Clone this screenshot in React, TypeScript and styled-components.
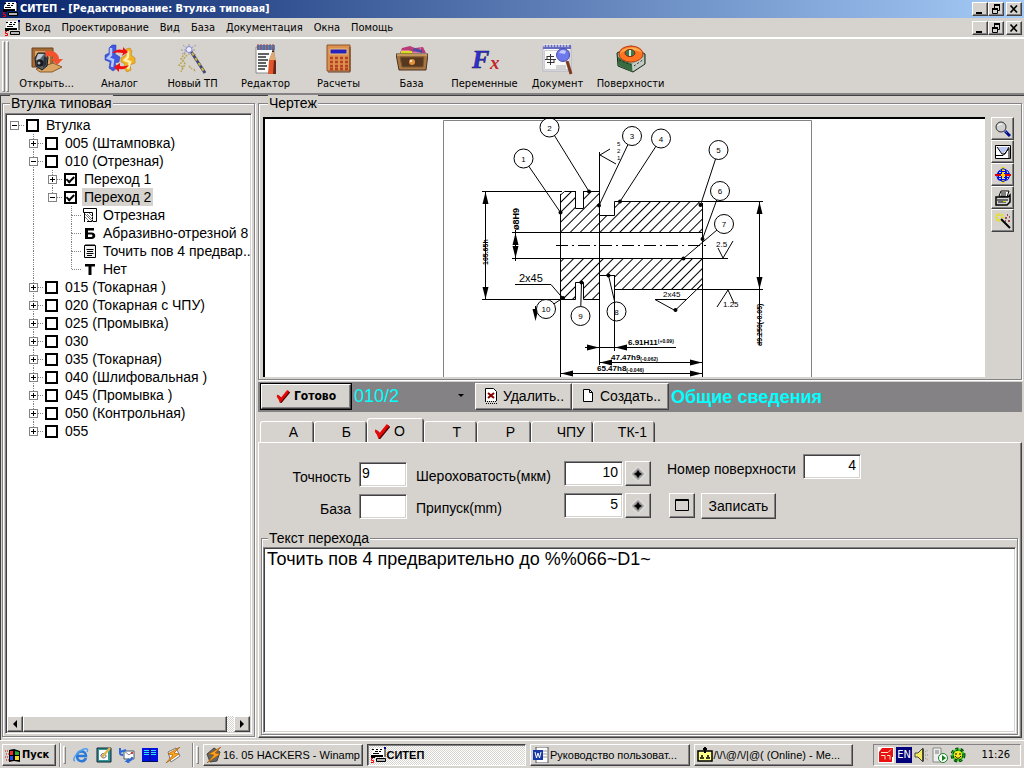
import React from "react";
import styled, { createGlobalStyle, css } from "styled-components";

const face = "#d6d3ce";
const grey = "#848284";
const dark = "#424142";
const ui = `"DejaVu Sans Condensed", "DejaVu Sans", sans-serif`;
const body = `"Liberation Sans", Arial, sans-serif`;

const GlobalStyle = createGlobalStyle`
  * { box-sizing: border-box; }
  body { margin: 0; background: ${face}; color: #000; }
  button, input, select, textarea { font: inherit; color: inherit; margin: 0; }
`;

const raised = css`
  background: ${face};
  border: 1px solid;
  border-color: #fff ${dark} ${dark} #fff;
  box-shadow: inset -1px -1px 0 ${grey};
`;
const sunken = css`
  border: 1px solid;
  border-color: ${grey} #fff #fff ${grey};
  box-shadow: inset 1px 1px 0 ${dark}, inset -1px -1px 0 ${face};
`;

const Screen = styled.div`
  min-height: 100vh;
  display: flex;
  flex-direction: column;
  font: 11px/14px ${ui};
`;
const TitleBar = styled.header`
  display: flex;
  align-items: center;
  height: 18px;
  padding: 0 2px;
  gap: 2px;
  color: #fff;
  background: linear-gradient(90deg, #08246b, #a5cbf7);
`;
const Title = styled.h1`
  flex: 1;
  margin: 0;
  font: bold 11px/16px ${ui};
  white-space: nowrap;
`;
const WindowButtons = styled.div`
  display: flex;
  align-items: center;
`;
const WindowButton = styled.button<{ $apart?: boolean }>`
  ${raised}
  width: 16px;
  height: 14px;
  padding: 0;
  margin-left: ${(p) => (p.$apart ? 2 : 0)}px;
  display: grid;
  place-items: center;
`;
const MenuBar = styled.nav`
  display: flex;
  align-items: center;
  height: 20px;
  padding: 0 2px 0 4px;
  border-bottom: 1px solid #fff;
`;
const MenuItems = styled.div`
  flex: 1;
  display: flex;
`;
const MenuItem = styled.button`
  border: 0;
  background: none;
  padding: 0 6px 0 5px;
  white-space: nowrap;
`;
const Toolbar = styled.div`
  display: flex;
  height: 57px;
  padding: 2px 0 0 2px;
  border-top: 1px solid #fff;
  border-bottom: 2px solid ${grey};
  box-shadow: 0 1px 0 ${dark};
`;
const Grip = styled.span`
  width: 3px;
  height: ${(p: { $h?: number }) => p.$h ?? 51}px;
  margin-right: 1px;
  border: 1px solid;
  border-color: #fff ${grey} ${grey} #fff;
`;
const ToolButton = styled.button`
  width: 73px;
  border: 0;
  padding: 3px 0 0;
  background: none;
  display: flex;
  flex-direction: column;
  align-items: center;
  gap: 1px;
  white-space: nowrap;
`;
const Main = styled.main`
  flex: 1;
  display: flex;
  padding: 0 2px 2px 0;
  border-left: 1px solid ${dark};
  font: 14px/16px ${body};
`;
const Group = styled.fieldset`
  display: flex;
  min-width: 0;
  margin: 0;
  padding: 2px;
  border: 1px solid ${grey};
  box-shadow: 1px 1px 0 #fff, inset 1px 1px 0 #fff;
`;
const Legend = styled.legend`
  padding: 0 1px;
  margin-left: 5px;
  background: ${face};
`;
const LeftPane = styled.aside`
  width: 256px;
  flex: none;
  display: flex;
  padding: 0 2px 1px 1px;
`;
const LeftGroup = styled(Group)`
  flex: 1;
`;
const TreeBox = styled.div`
  ${sunken}
  flex: 1;
  min-width: 0;
  background: #fff;
  padding: 2px 1px 1px 0;
  display: flex;
  flex-direction: column;
`;
const Tree = styled.ul`
  flex: 1;
  margin: 0 0 0 -1px;
  padding: 0;
  list-style: none;
  overflow: hidden;
`;
const Row = styled.li`
  display: flex;
  height: 18px;
  align-items: center;
  white-space: nowrap;
`;
const Cell = styled.svg`
  width: 19px;
  height: 18px;
  flex: none;
`;
const Tick = styled.input`
  appearance: none;
  flex: none;
  width: 13px;
  height: 13px;
  margin: 0 5px 0 2px;
  border: 2px solid #000;
  background: #fff;
  display: grid;
  place-items: center;
  &:checked::after {
    content: "";
    width: 6px;
    height: 3px;
    border: solid #000;
    border-width: 0 0 2px 2px;
    transform: rotate(-45deg) translate(0, -1px);
  }
`;
const NodeLabel = styled.label<{ $selected?: boolean }>`
  padding: 0 2px;
  line-height: 18px;
  background: ${(p) => (p.$selected ? face : "transparent")};
`;
const LeafIcon = styled.svg`
  width: 14px;
  height: 14px;
  flex: none;
  margin: 0 4px 0 2px;
`;
const ScrollBar = styled.div`
  display: flex;
  height: 16px;
  margin-left: 1px;
  background: repeating-conic-gradient(${face} 0 25%, #fff 0 50%) 0 0 / 2px 2px;
`;
const ScrollButton = styled.button`
  ${raised}
  width: 16px;
  padding: 0;
  display: grid;
  place-items: center;
`;
const ScrollThumb = styled.div`
  ${raised}
  width: 204px;
  margin-right: auto;
`;
const RightPane = styled.section`
  flex: 1;
  min-width: 0;
  display: flex;
  flex-direction: column;
  padding-left: 1px;
`;
const DrawingGroup = styled(Group)`
  height: 285px;
  padding: 6px 7px 2px 4px;
  gap: 6px;
`;
const DrawingBox = styled.div`
  flex: 1;
  background: #fff;
  border: solid #000;
  border-width: 2px 0 0 2px;
  display: flex;
  justify-content: center;
  overflow: hidden;
  svg { flex: none; margin-left: 6px; }
`;
const SideTools = styled.div`
  display: flex;
  flex-direction: column;
`;
const SideButton = styled.button`
  ${raised}
  width: 23px;
  height: 23px;
  padding: 0;
  display: grid;
  place-items: center;
`;
const ActionBar = styled.div`
  display: flex;
  align-items: center;
  height: 30px;
  margin-top: 2px;
  padding: 0 2px 2px;
  background: ${grey};
`;
const ActionButton = styled.button<{ $main?: boolean }>`
  ${raised}
  height: 27px;
  width: ${(p) => (p.$main ? 92 : 97)}px;
  padding: 0 4px;
  display: flex;
  align-items: center;
  justify-content: center;
  gap: 4px;
  white-space: nowrap;
  ${(p) => p.$main && css`
    font: bold 12px/14px ${ui};
    outline: 1px solid #000;
    outline-offset: -1px;
    border-width: 2px;
  `}
`;
const StepPicker = styled.div`
  display: grid;
  align-items: center;
  width: 123px;
  > * { grid-area: 1 / 1; }
  svg { justify-self: end; margin-right: 11px; pointer-events: none; }
`;
const StepSelect = styled.select`
  appearance: none;
  border: 0;
  padding: 0 2px;
  background: none;
  color: #00ffff;
  font: 18px/24px ${body};
`;
const Info = styled.h2`
  margin: 0;
  padding: 2px 0 0 2px;
  color: #00ffff;
  font: bold 18px/26px ${body};
`;
const Tabs = styled.div`
  display: flex;
  align-items: flex-end;
  height: 30px;
  gap: 1px;
  padding-left: 2px;
`;
const Tab = styled.button<{ $w: number; $on?: boolean }>`
  width: ${(p) => p.$w}px;
  height: ${(p) => (p.$on ? 24 : 21)}px;
  padding: 0 ${(p) => (p.$on ? 17 : p.$w > 60 ? 6 : 14)}px 0 6px;
  display: flex;
  align-items: center;
  justify-content: space-between;
  background: ${face};
  border: 1px solid #fff;
  border-bottom: 0;
  border-right-color: ${grey};
  border-radius: 3px 2px 0 0;
  box-shadow: 1px 1px 0 ${dark};
  span { margin-left: auto; }
`;
const TabPanel = styled.div`
  flex: 1;
  display: flex;
  flex-direction: column;
  padding: 9px 3px 2px 2px;
  border: 1px solid;
  border-color: #fff ${dark} ${dark} #fff;
  box-shadow: inset -1px -1px 0 ${grey};
`;
const Form = styled.form`
  display: flex;
  height: 78px;
  padding-left: 28px;
`;
const FieldColumn = styled.div<{ $top: number; $cols: string; $gap: number }>`
  display: grid;
  grid-template-columns: ${(p) => p.$cols};
  grid-auto-rows: 25px;
  align-content: start;
  align-items: center;
  gap: 7px 2px;
  padding-top: ${(p) => p.$top}px;
  margin-left: ${(p) => p.$gap}px;
  white-space: nowrap;
`;
const FieldLabel = styled.label<{ $right?: boolean }>`
  padding-top: 4px;
  text-align: ${(p) => (p.$right ? "right" : "left")};
  padding-right: 6px;
`;
const Field = styled.input<{ $right?: boolean }>`
  ${sunken}
  width: 100%;
  height: 25px;
  padding: 0 4px 3px 2px;
  background: #fff;
  border-radius: 0;
  text-align: ${(p) => (p.$right ? "right" : "left")};
`;
const SquareButton = styled.button`
  ${raised}
  width: 26px;
  height: 25px;
  padding: 0;
  display: grid;
  place-items: center;
`;
const FormActions = styled.div`
  grid-column: 1 / -1;
  display: flex;
  gap: 6px;
  padding: 14px 0 0 2px;
`;
const SaveButton = styled.button`
  ${raised}
  width: 75px;
  height: 26px;
  padding: 0;
`;
const TextGroup = styled(Group)`
  flex: 1;
  padding: 1px;
`;
const TextArea = styled.textarea`
  ${sunken}
  flex: 1;
  min-width: 0;
  padding: 1px 3px;
  background: #fff;
  font: 18px/20px ${body};
  resize: none;
  border-radius: 0;
`;
const TaskBar = styled.footer`
  display: flex;
  align-items: center;
  height: 28px;
  padding: 1px 3px 0 2px;
  border-top: 1px solid #fff;
`;
const StartButton = styled.button`
  ${raised}
  width: 54px;
  height: 22px;
  padding: 0 2px;
  display: flex;
  align-items: center;
  gap: 1px;
  font: bold 11px/14px ${ui};
`;
const BarSplit = styled.span`
  width: 2px;
  height: 24px;
  margin: 0 2px 0 3px;
  border-left: 1px solid ${grey};
  border-right: 1px solid #fff;
`;
const QuickLaunch = styled.div`
  display: flex;
  gap: 7px;
  width: 122px;
  padding-left: 6px;
`;
const QuickLink = styled.button`
  width: 16px;
  height: 16px;
  padding: 0;
  border: 0;
  background: none;
`;
const Tasks = styled.div`
  flex: 1;
  min-width: 0;
  display: flex;
  gap: 4px;
  padding: 0 20px 0 3px;
`;
const TaskButton = styled.button<{ $on?: boolean }>`
  ${raised}
  flex: 0 1 160px;
  min-width: 0;
  height: 22px;
  padding: 0 2px;
  display: flex;
  align-items: center;
  gap: 1px;
  font: 11px/14px ${body};
  white-space: nowrap;
  svg { flex: none; }
  ${(p) => p.$on && css`
    border-color: ${dark} #fff #fff ${dark};
    box-shadow: inset 1px 1px 0 ${grey};
    background: repeating-conic-gradient(${face} 0 25%, #fff 0 50%) 0 0 / 2px 2px;
    font-weight: bold;
  `}
`;
const Tray = styled.div`
  display: flex;
  align-items: center;
  width: 148px;
  height: 22px;
  padding: 0 10px 0 4px;
  gap: 2px;
  border: 1px solid;
  border-color: ${grey} #fff #fff ${grey};
`;
const Lang = styled.span`
  width: 16px;
  height: 16px;
  background: #00007b;
  color: #fff;
  text-align: center;
  line-height: 16px;
`;
const Clock = styled.time`
  margin-left: auto;
`;

type IconProps = { size?: number; view?: string; children: React.ReactNode };
const Icon = ({ size = 16, view = "0 0 16 16", children }: IconProps) => (
  <svg width={size} height={size} viewBox={view} aria-hidden="true">{children}</svg>
);

const AppIcon = () => (
  <Icon>
    <path d="M4 1h11v9H2V5z" fill="#fff" />
    <path d="M2 2.500h2M6 2.500h2M10 2.500h2M5 4.500h3M9 4.500h2M3 6.500h6" stroke="#000" fill="none" />
    <path d="M15 1v9" stroke="#000" /><path d="M14 0h2v2h-2z" fill="#00007b" />
    <path d="M6.500 11.500h9v3h-9z" fill="#b5b6b5" stroke="#000" />
    <path d="M1 8h12v2H1z" fill="#000" /><path d="M1 10h4v1H1z" fill="#000" />
    <path d="M3 11.500H1.500v2h2v2H1" stroke="#f00000" fill="none" />
  </Icon>
);
const MinimizeGlyph = () => <Icon size={12} view="0 0 12 12"><path d="M2 9h6v2H2z" /></Icon>;
const RestoreGlyph = () => (
  <Icon size={12} view="0 0 12 12">
    <path d="M4 1h6v2H4zM2 5h6v2H2z" />
    <path d="M4.500 3v2M9.500 2v5.500H8M2.500 6v4.500h5V5" fill="none" stroke="#000" />
  </Icon>
);
const CloseGlyph = () => (
  <Icon size={12} view="0 0 12 12"><path d="M2.500 2.500l6.500 7M9 2.500l-6.500 7" stroke="#000" strokeWidth="1.700" /></Icon>
);
const WindowControls = ({ of }: { of: string }) => (
  <WindowButtons>
    <WindowButton aria-label={`Свернуть ${of}`}><MinimizeGlyph /></WindowButton>
    <WindowButton aria-label={`Восстановить ${of}`}><RestoreGlyph /></WindowButton>
    <WindowButton $apart aria-label={`Закрыть ${of}`}><CloseGlyph /></WindowButton>
  </WindowButtons>
);

const toolIcons = {
  open: (
    <>
      <path d="M1 4h21v19H1z" fill="#a86a35" stroke="#6b421f" />
      <path d="M4 7h15v13H4z" fill="#d9a567" />
      <path d="M5 25l17-6 9 4-10 5H9z" fill="#dba663" stroke="#8b5a2b" />
      <path d="M4 14l3-5h7l3 4-1 9-5 4-6-4z" fill="#59616b" stroke="#15181d" />
      <path d="M7 10h6l-4 5-4 1z" fill="#c0c8d2" /><path d="M13 12l3 2-1 7-3 3z" fill="#2b3036" />
      <circle cx="9" cy="19" r="3.500" fill="#16181c" /><circle cx="8" cy="19" r="1.500" fill="#a0a8b0" />
      <path d="M14 7h7c4 1 7 4 7 8h4l-6 6-6-6h3c0-3-4-4-8-2z" fill="#f4512c" />
    </>
  ),
  analog: (
    <>
      <path d="M5 4l3-3h4v5l-1 4 5 3-1 5-4 1 2 5-4 3-4-3 1-6-5-2V11l4-2z" fill="#4158e0" stroke="#2338a8" strokeWidth="0.500" />
      <path d="M7 4v7l-3 3 5 2-1 7" stroke="#b4c8ff" strokeWidth="2.500" fill="none" />
      <path d="M22 5l4-1 2 3-1 4 4 3v5l-5 2 1 5-4 2-3-4 1-4-4-2v-4l5-3z" fill="#f2b322" stroke="#b0720c" strokeWidth="0.500" />
      <path d="M24 7v6l-3 3 5 2-2 7" stroke="#fff0b0" strokeWidth="2.500" fill="none" />
      <path d="M8 9q5-5 11-3V3l5 5-6 4 1-3q-5-1-11 0z" fill="#f01010" />
      <path d="M25 21q-3 5-10 4v3l-5-5 6-4v3q4 1 9-1z" fill="#f01010" />
    </>
  ),
  wizard: (
    <>
      <path d="M13 6l15 23" stroke="#464673" strokeWidth="3" /><path d="M15 9l13 20" stroke="#c9b53b" strokeWidth="2" strokeDasharray="3 3" />
      <path d="M6 1l13 10M19 1L5 10M12 0v12M4 6h15" stroke="#9a9cae" strokeDasharray="2 1" />
      <circle cx="12" cy="5.500" r="3" fill="#eef0ff" stroke="#8185d0" />
      <path d="M8 9l-4 6 2 2-4 4 4 2-2 5M10 11l-4 5 2 4-3 6M12 22l3 3M17 25l1 3" stroke="#b9a654" strokeWidth="1.500" strokeDasharray="2 1" fill="none" />
    </>
  ),
  editor: (
    <>
      <path d="M6 3h18v26H6z" fill="#fbfbfb" stroke="#8a8a8a" />
      <path d="M7 1h18v5H7z" fill="#4a85c8" /><path d="M8 0v6M11 0v6M14 0v6M17 0v6M20 0v6M23 0v6" stroke="#a83c38" />
      <path d="M8 10h11M8 13h8M8 16h10M8 19h8M8 22h9M8 25h7" stroke="#303030" strokeWidth="1.500" />
      <path d="M19 16l4-10 3 10v14h-8z" fill="#e0552b" /><path d="M19 16l4-10 3 10z" fill="#dcaa77" /><path d="M22 8l1-3 1 3z" fill="#111" />
      <path d="M24 16l2 1v13h-3z" fill="#66261b" />
    </>
  ),
  calc: (
    <>
      <path d="M4 1h23v26H4z" fill="#dd914f" stroke="#8d552c" /><path d="M5 28h22V3" fill="none" stroke="#6b3b1c" />
      <path d="M7 5h17v5H7z" fill="#2622bb" stroke="#e9bc85" />
      <path d="M7 14h18M7 18h18M7 22h18M7 25h18" stroke="#b64122" strokeWidth="2.500" strokeDasharray="3 2" />
    </>
  ),
  base: (
    <>
      <path d="M6 4l8-2 5 2 8-1 3 6H4z" fill="#b73c78" /><path d="M5 6h8l4 2 8-4v5H5z" fill="#e37a9b" /><path d="M5 7h11v3H5z" fill="#d9dd27" />
      <path d="M18 4l8 2v3l-9-2z" fill="#4a4ca4" />
      <path d="M0 10h32l-2 16H3z" fill="#a87744" stroke="#4a331e" /><path d="M1 10h30v2H1z" fill="#c5955e" />
      <path d="M4 13h24l-1 10H6z" fill="#55381f" stroke="#7d5730" /><circle cx="16" cy="18" r="3" fill="#e8913b" /><circle cx="15" cy="17" r="1" fill="#fff" />
    </>
  ),
  fx: (
    <g fontFamily={`"Liberation Serif", serif`} fontStyle="italic" fontWeight="bold">
      <text x="3" y="24" fontSize="26" fill="#3030d0" stroke="#17175c" strokeWidth="0.500">F</text>
      <text x="21" y="25" fontSize="19" fill="#c1272d">x</text>
    </g>
  ),
  doc: (
    <>
      <path d="M1 2h28v25H1z" fill="#fafafa" stroke="#b0b2c0" /><path d="M1 1h28v4H1z" fill="#686cc0" />
      <path d="M2 0v3M5 0v3M8 0v3M11 0v3M14 0v3M17 0v3M20 0v3M23 0v3M26 0v3" stroke="#fff" />
      <path d="M2.500 6.500h25v19h-25z" fill="none" stroke="#ccc" />
      <path d="M3 15.500h11M8.500 10v11M5 12.500h7M5 18.500h7M5 12v3M12 16v3" stroke="#333" fill="none" /><path d="M14 22h10M14 24h10" stroke="#aaa" />
      <circle cx="21" cy="11" r="6.500" fill="#6e79ed" stroke="#4a4ca8" /><path d="M17 9c2-4 5-3 7-2l-1 3z" fill="#c2c9ff" />
      <path d="M25 17l4 13" stroke="#7d3a22" strokeWidth="3" />
    </>
  ),
  surface: (
    <>
      <path d="M2 9l14-7 14 8v10l-12 8L3 22z" fill="#8fae91" stroke="#132716" /><path d="M3 13l14 7v8L3 21z" fill="#396b41" />
      <path d="M17 20l12-7v7l-11 7z" fill="#c5cbc4" /><path d="M4 16l12 5M19 22l10-7" stroke="#1c3020" strokeDasharray="2 2" />
      <ellipse cx="16" cy="10" rx="12" ry="8" fill="#ff7321" stroke="#c03c14" /><path d="M5 10c2-8 19-9 22-1-4-3-17-5-22 1z" fill="#ffb050" />
      <ellipse cx="15" cy="9" rx="5" ry="3.500" fill="#407b50" stroke="#7b2710" /><path d="M14 6v6h2V6z" fill="#d4ede0" />
    </>
  ),
};
const tools: [keyof typeof toolIcons, string][] = [
  ["open", "Открыть..."], ["analog", "Аналог"], ["wizard", "Новый ТП"], ["editor", "Редактор"], ["calc", "Расчеты"],
  ["base", "База"], ["fx", "Переменные"], ["doc", "Документ"], ["surface", "Поверхности"],
];

/* Tree columns: space, a through line, an end of a branch, or an expander box */
type Col = " " | "|" | "t" | "L" | "+" | "-";
const TreeCell = ({ kind, up, down }: { kind: Col; up: boolean; down: boolean }) => (
  <Cell viewBox="0 0 19 18" aria-hidden="true">
    <g stroke={grey} strokeDasharray="1 1" fill="none">
      {kind !== " " && up && <path d="M9.500 0v9" />}
      {kind !== " " && down && <path d="M9.500 9v9" />}
      {"tL+-".includes(kind) && <path d="M10 9.500h9" />}
    </g>
    {(kind === "+" || kind === "-") && (
      <g stroke="#000">
        <rect x="5.500" y="5.500" width="8" height="8" fill="#fff" stroke={grey} />
        <path d={kind === "+" ? "M7 9.500h5M9.500 7v5" : "M7 9.500h5"} />
      </g>
    )}
  </Cell>
);
const leafIcons = {
  part: (
    <>
      <path d="M0.500 4.500v-4h13v13h-4v-9h-9" fill="none" stroke="#000" />
      <path d="M1.500 5v9M4 13.500h6" stroke="#000" />
      <path d="M2 6l8 8M4 6l6 6M6 5l4 4M2 9l4 4" stroke="#777" />
    </>
  ),
  b: <path d="M2 2h9v2.500H5V6.500h3.500c5 0 5 6.500 0 6.500H2zM5 8.500v2.500h3c2 0 2-2.500 0-2.500z" fillRule="evenodd" />,
  note: (
    <>
      <path d="M1.500 1.500h11v12h-11zM3 0v2M5 0v2M7 0v2M9 0v2M11 0v2" fill="#f3f3f3" stroke="#000" />
      <path d="M3.500 5.500h7M4 7.500h6M3.500 9.500h7M4 11.500h5" stroke="#000" />
    </>
  ),
  t: <path d="M2 2h10v2.500H8.500V13h-3V4.500H2z" />,
};
type Node = { cols: string; text: string; checked?: boolean; selected?: boolean; leaf?: keyof typeof leafIcons };
const nodes: Node[] = [
  { cols: "-", text: "Втулка" },
  { cols: " +", text: "005 (Штамповка)" },
  { cols: " -", text: "010 (Отрезная)" },
  { cols: " |+", text: "Переход 1", checked: true },
  { cols: " |-", text: "Переход 2", checked: true, selected: true },
  { cols: " | t", text: "Отрезная", leaf: "part" },
  { cols: " | t", text: "Абразивно-отрезной 8", leaf: "b" },
  { cols: " | t", text: "Точить пов 4 предвар..", leaf: "note" },
  { cols: " | L", text: "Нет", leaf: "t" },
  { cols: " +", text: "015 (Токарная )" },
  { cols: " +", text: "020 (Токарная с ЧПУ)" },
  { cols: " +", text: "025 (Промывка)" },
  { cols: " +", text: "030" },
  { cols: " +", text: "035 (Токарная)" },
  { cols: " +", text: "040 (Шлифовальная )" },
  { cols: " +", text: "045 (Промывка )" },
  { cols: " +", text: "050 (Контрольная)" },
  { cols: " +", text: "055" },
];

const balloons: [number, number, number, number, number][] = [
  [1, 523.5, 158.5, 560.5, 212.5], [2, 549.5, 127.5, 589, 191.5], [3, 632, 136, 599, 205.5], [4, 661, 138.5, 620, 201.5],
  [5, 718.5, 150, 700.5, 205], [6, 720, 191, 702.5, 239], [7, 724, 224, 683.5, 258.5], [8, 616.5, 311.5, 608.5, 275.5],
  [9, 580.5, 316, 581.5, 282.5], [10, 546, 309, 563, 298],
];
const Arrow = ({ x, y, turn }: { x: number; y: number; turn: number }) => (
  <path d="M0 0l12-3v6z" transform={`translate(${x} ${y}) rotate(${turn})`} />
);
const Drawing = () => (
  <svg width="370" height="258" viewBox="443 119 370 258" fontFamily={body} fontSize="8" role="img" aria-label="Чертеж втулки">
    <defs>
      <pattern id="hatch" width="7" height="7" patternUnits="userSpaceOnUse" patternTransform="rotate(45)">
        <path d="M0.500 0v7" stroke="#000" />
      </pattern>
    </defs>
    <path d="M443.500 377V120.500h368V377" fill="none" stroke={grey} />
    <g fill="url(#hatch)" stroke="#000">
      <path d="M560.500 195l4-3.500h11v17h8v-17h16v24h15v-14H698l4.500 4.500v26.500h-142z" />
      <path d="M560.500 258.500h142V284l-5.500 5.500h-82.500v-14h-15v24h-16v-17h-8v17H564l-3.500-4.500z" />
    </g>
    <g fill="none" stroke="#000">
      <path d="M560.500 194v183M599.500 152v213M614.500 275v76M702.500 203v174M575.500 191v17M583.500 191v17" />
      <path d="M482 191.500h80M482 299.500h82M512 232.500h49M512 258.500h49M485.500 192v107M515.500 230v31" />
      <path d="M556 245.500h150" strokeDasharray="12 4 2 4" />
      <path d="M698 201.500h65M614 289.500h149M759.500 202v143M702 258.500h26" />
      <path d="M610 149l-10 6 16 9M718 248l5 10 10-17M717 307l11-17 6 13" />
      <path d="M515 284.500h36l12 14M686 299.500h-31l20 11 28-27M535.500 306v8" />
      <path d="M585 347.500h91M600 362.500h102M561 373.500h141" />
    </g>
    <Arrow x={485.5} y={192} turn={90} /><Arrow x={485.5} y={299} turn={-90} />
    <Arrow x={515.5} y={233} turn={90} /><Arrow x={515.5} y={258} turn={-90} />
    <Arrow x={759.5} y={202} turn={90} /><Arrow x={759.5} y={289} turn={-90} />
    <Arrow x={535.5} y={321} turn={-90} />
    <Arrow x={599} y={347.5} turn={180} /><Arrow x={615} y={347.5} turn={0} />
    <Arrow x={600} y={362.5} turn={0} /><Arrow x={702} y={362.5} turn={180} />
    <Arrow x={561} y={373.5} turn={0} /><Arrow x={702} y={373.5} turn={180} />
    {balloons.map(([n, cx, cy, x, y]) => (
      <g key={n}>
        <path d={n === 8 ? `M614.500 301L${x} ${y}` : `M${cx} ${cy}L${x} ${y}`} stroke="#000" />
        <circle cx={cx} cy={cy} r="9.500" fill={n === 8 ? "none" : "#fff"} stroke="#000" />
        <circle cx={x} cy={y} r="2" />
        <text x={cx} y={cy + 3} textAnchor="middle">{n}</text>
      </g>
    ))}
    <circle cx="675.500" cy="310" r="2" />
    <text x="519" y="282" fontSize="11">2x45</text>
    <text x="663" y="297">2x45</text>
    <text x="716" y="247">2.5</text>
    <text x="723" y="307">1.25</text>
    <g fontSize="6">
      <text x="617" y="146">5</text><text x="617" y="153">2</text><text x="617" y="160">1</text>
    </g>
    <text x="628" y="345" fontWeight="bold">6.91H11<tspan fontSize="5" dy="-2">(+0.09)</tspan></text>
    <text x="611" y="360" fontWeight="bold">47.47h9<tspan fontSize="5" dy="1">(-0.062)</tspan></text>
    <text x="597" y="371" fontWeight="bold">65.47h8<tspan fontSize="5" dy="1">(-0.046)</tspan></text>
    <g fontWeight="bold" fontSize="7">
      <text transform="translate(488 265) rotate(-90)">105.65h</text>
      <text transform="translate(519 230) rotate(-90)" fontSize="9">ø8H9</text>
      <text transform="translate(762 346) rotate(-90)">d9.250(-0.05)</text>
    </g>
  </svg>
);

const sideIcons: [string, React.ReactNode][] = [
  ["Масштаб", <><circle cx="6" cy="6" r="5" fill="#cfd0d0" stroke="#333" /><path d="M3 5c1-2 3-2 4-2" stroke="#fff" fill="none" /><path d="M10 10l5 5" stroke="#00108c" strokeWidth="3" /><path d="M9 9l3 3" stroke="#5a6cc0" /></>],
  ["Лист", <><path d="M0.500 1.500h15v13h-15z" fill="#fff" stroke="#000" /><path d="M2 3l6 7 5-6V3z" fill="#b9c6f4" /><path d="M2 3l5 7h3l4-7M1 11.500h7l6-7v10" stroke="#000" fill="none" /></>],
  ["Сетка", <><path d="M8 0v4M8 12v4" stroke="#f0d800" strokeWidth="3" /><path d="M8 1.500l5 2.500 2 4-2 4.500-5 2-5-2L1.500 8 4 4z" fill="none" stroke="#0010e0" /><path d="M3.500 4.500h8v8h-8zM6.500 2v12M10.500 2v12M2 6.500h12M2 10.500h12" fill="none" stroke="#0010e0" /><path d="M0 8h16" stroke="#e00000" strokeWidth="2" /><path d="M8 5v6M6 8h4" stroke="#f0d800" strokeWidth="2" /></>],
  ["Печать", <><path d="M4 6l2-5h8l-2 6z" fill="#fff" stroke="#000" /><path d="M6 3h5M6 5h5" stroke="#000" /><path d="M1 7h12l2-2v7l-3 3H1z" fill="#d5d5d5" stroke="#000" strokeWidth="1.500" /><path d="M2 10h11M3 12h8" stroke="#000" /><path d="M8 11h3v1H8z" fill="#d9cf20" /></>],
  ["Мастер", <><path d="M6 6l9 9" stroke="#000" strokeWidth="2" /><path d="M4.500 0v3M0 4.500h3M1 1l2 2M8 1L6 3M1 8l2-2M4.500 6v3M6 4.500h3" stroke="#e4df18" strokeWidth="1.500" /><path d="M10 5h2M13 8h2M12 2h1M10 8h1M14 4h1" stroke="#8c2222" strokeWidth="1.500" /></>],
];
const RedCheck = ({ w = 14 }: { w?: number }) => (
  <Icon size={w}><path d="M2 9c2 0 3 2 4 5l9-11" stroke="#520000" strokeWidth="3" fill="none" /><path d="M1 8c2 0 3 2 4 5L14 2" stroke="#e80808" strokeWidth="3" fill="none" /></Icon>
);
const Diamond = () => (
  <Icon>
    <path d="M8 0.500L15.500 8 8 15.500 0.500 8z" fill="#b4b2ae" stroke="#efefef" /><path d="M8 3l5 5-5 5-5-5z" fill="#8a8a8a" /><path d="M8 4l1.500 2.500L12 8 9.500 9.500 8 12 6.500 9.500 4 8l2.500-1.500z" fill="#000" />
  </Icon>
);

const tabs: [string, number, boolean][] = [
  ["А", 53, false], ["Б", 52, false], ["О", 56, true], ["Т", 52, false], ["Р", 53, false], ["ЧПУ", 61, false], ["ТК-1", 61, false],
];

const bolt = (
  <><path d="M1 7l7-6 6 4-3 9-7 1z" fill="#666" stroke="#444" /><path d="M15 0L3 7l5 1-7 8 13-9-5-1z" fill="#ffa51c" stroke="#a85a00" strokeWidth="0.700" /></>
);
const quick: [string, React.ReactNode][] = [
  ["Internet Explorer", <><path d="M13 11c-2 5-9 4-9-2s9-6 9 0H5" fill="none" stroke="#2a78d8" strokeWidth="2.500" /><path d="M2 14c-4-1 3-10 9-12 4-1 4 1 3 3" fill="none" stroke="#4da0f0" strokeWidth="1.500" /></>],
  ["Рабочий стол", <><path d="M1 1h14v14H1z" fill="#2f9696" stroke="#123" /><path d="M3 3h9v10H3z" fill="#fff" /><path d="M5 8c2-3 5-1 5 1s-4 3-5 0z" fill="none" stroke="#456" /><path d="M6 10l8-9" stroke="#e2b548" strokeWidth="2.500" /></>],
  ["Почта", <><path d="M5 4h10v8H5z" fill="#fff" stroke="#456" /><path d="M5 4l5 4 5-4" fill="none" stroke="#888" /><path d="M12 5h2v2h-2z" fill="#e33" /><path d="M1 1v5c0 2 1 2 3 2M1 5l6-2M13 10c0 3-2 4-5 4l2-2M8 14l2 2" stroke="#2868d8" strokeWidth="2" fill="none" /></>],
  ["Книга", <><path d="M0 1h16v13H0z" fill="#0010e0" /><path d="M2 3.500h5M2 5.500h5M2 7.500h5M9 3.500h5M9 5.500h5M9 7.500h5" stroke="#30e0f8" /><path d="M8 1v13M0 14.500h16" stroke="#001060" /></>],
  ["Winamp", <><path d="M3 5l8-4 4 8-9 6z" fill="#fff" stroke="#777" /><path d="M15 0L3 7l5 1-7 8 13-9-5-1z" fill="#ffa51c" stroke="#a85a00" strokeWidth="0.700" /></>],
];

export default function App() {
  return (
    <>
      <GlobalStyle />
      <Screen>
        <TitleBar>
          <AppIcon />
          <Title>СИТЕП - [Редактирование: Втулка типовая]</Title>
          <WindowControls of="программу" />
        </TitleBar>
        <MenuBar>
          <AppIcon />
          <MenuItems>
            {["Вход", "Проектирование", "Вид", "База", "Документация", "Окна", "Помощь"].map((m) => <MenuItem key={m}>{m}</MenuItem>)}
          </MenuItems>
          <WindowControls of="документ" />
        </MenuBar>
        <Toolbar>
          <Grip /><Grip />
          {tools.map(([id, text]) => (
            <ToolButton key={id}>
              <Icon size={32} view="0 0 32 32">{toolIcons[id]}</Icon>
              {text}
            </ToolButton>
          ))}
        </Toolbar>
        <Main>
          <LeftPane>
            <LeftGroup>
              <Legend>Втулка типовая</Legend>
              <TreeBox>
                <Tree>
                  {nodes.map((n, i) => (
                    <Row key={n.text}>
                      {[...n.cols].map((c, k) => (
                        <TreeCell key={k} kind={c as Col} up={k > 0} down={k > 0 && c !== "L" && !(k === 2 && c === "-") && i < nodes.length - 1} />
                      ))}
                      {n.leaf ? <LeafIcon viewBox="0 0 14 14">{leafIcons[n.leaf]}</LeafIcon> : <Tick type="checkbox" id={`n${i}`} defaultChecked={n.checked} />}
                      <NodeLabel htmlFor={n.leaf ? undefined : `n${i}`} $selected={n.selected}>{n.text}</NodeLabel>
                    </Row>
                  ))}
                </Tree>
                <ScrollBar>
                  <ScrollButton aria-label="Влево"><Icon size={8} view="0 0 8 8"><path d="M6 0v8L2 4z" /></Icon></ScrollButton>
                  <ScrollThumb />
                  <ScrollButton aria-label="Вправо"><Icon size={8} view="0 0 8 8"><path d="M2 0v8l4-4z" /></Icon></ScrollButton>
                </ScrollBar>
              </TreeBox>
            </LeftGroup>
          </LeftPane>
          <RightPane>
            <DrawingGroup>
              <Legend>Чертеж</Legend>
              <DrawingBox><Drawing /></DrawingBox>
              <SideTools>
                {sideIcons.map(([name, art]) => <SideButton key={name} aria-label={name}><Icon>{art}</Icon></SideButton>)}
              </SideTools>
            </DrawingGroup>
            <ActionBar>
              <ActionButton $main><RedCheck />Готово</ActionButton>
              <StepPicker>
                <StepSelect aria-label="Переход"><option>010/2</option></StepSelect>
                <svg width="6" height="4" viewBox="0 0 6 4"><path d="M0 0h6L3 3z" /></svg>
              </StepPicker>
              <ActionButton>
                <Icon><path d="M2.500 13V0.500h8l3 3V13" fill="#fff" stroke="#000" /><path d="M2 13.500h12M3 15.500h12" stroke="#000" strokeDasharray="1 1" /><path d="M5 5l6 5M11 5l-6 5" stroke="#840000" strokeWidth="2" /></Icon>
                Удалить..
              </ActionButton>
              <ActionButton>
                <Icon><path d="M3.500 1.500h6l3 3v9h-9z" fill="#fff" stroke="#000" /><path d="M9.500 1.500v3h3" fill="none" stroke="#000" /></Icon>
                Создать..
              </ActionButton>
              <Info>Общие сведения</Info>
            </ActionBar>
            <Tabs role="tablist">
              {tabs.map(([text, w, on]) => (
                <Tab key={text} role="tab" aria-selected={on} $w={w} $on={on}>{on && <RedCheck w={16} />}<span>{text}</span></Tab>
              ))}
            </Tabs>
            <TabPanel role="tabpanel">
              <Form>
                <FieldColumn $top={10} $cols="68px 48px" $gap={0}>
                  <FieldLabel $right htmlFor="acc">Точность</FieldLabel><Field id="acc" defaultValue="9" />
                  <FieldLabel $right htmlFor="bas">База</FieldLabel><Field id="bas" />
                </FieldColumn>
                <FieldColumn $top={9} $cols="146px 59px 26px" $gap={9}>
                  <FieldLabel htmlFor="rough">Шероховатость(мкм)</FieldLabel><Field id="rough" $right defaultValue="10" />
                  <SquareButton type="button" aria-label="Выбрать шероховатость"><Diamond /></SquareButton>
                  <FieldLabel htmlFor="allow">Припуск(mm)</FieldLabel><Field id="allow" $right defaultValue="5" />
                  <SquareButton type="button" aria-label="Выбрать припуск"><Diamond /></SquareButton>
                </FieldColumn>
                <FieldColumn $top={2} $cols="134px 58px" $gap={16}>
                  <FieldLabel htmlFor="surf">Номер поверхности</FieldLabel><Field id="surf" $right defaultValue="4" />
                  <FormActions>
                    <SquareButton type="button" aria-label="Окно"><Icon><path d="M1.500 2.500h13v11h-13zM1 3.500h14" fill="none" stroke="#000" /></Icon></SquareButton>
                    <SaveButton type="button">Записать</SaveButton>
                  </FormActions>
                </FieldColumn>
              </Form>
              <TextGroup>
                <Legend>Текст перехода</Legend>
                <TextArea aria-label="Текст перехода" defaultValue="Точить пов 4 предварительно до %%066~D1~" />
              </TextGroup>
            </TabPanel>
          </RightPane>
        </Main>
        <TaskBar>
          <StartButton>
            <Icon><path d="M0 4h4M1 7h3M0 10h4M1 13h3" stroke="#c00" strokeDasharray="1 1" /><path d="M4 3l5-1v12l-5 1zM9 2l6 2v11l-6-1z" fill="#000" /><path d="M5 4h3v4H5z" fill="#f03020" /><path d="M10 4l4 1v3h-4z" fill="#20b030" /><path d="M5 9h3v4H5z" fill="#2050f0" /><path d="M10 9h4v4h-4z" fill="#f0d820" /></Icon>
            Пуск
          </StartButton>
          <BarSplit /><Grip $h={18} />
          <QuickLaunch>
            {quick.map(([name, art]) => <QuickLink key={name} aria-label={name}><Icon>{art}</Icon></QuickLink>)}
          </QuickLaunch>
          <BarSplit /><Grip $h={18} />
          <Tasks>
            <TaskButton><Icon>{bolt}</Icon>16. 05 HACKERS - Winamp</TaskButton>
            <TaskButton $on><AppIcon />СИТЕП</TaskButton>
            <TaskButton>
              <Icon><path d="M3 0h12v16H3z" fill="#fff" stroke="#555" /><path d="M10 4h4M10 7h4M10 10h4" stroke="#999" /><path d="M0 3h10v10H0z" fill="#1838a8" /><path d="M2 5l1.500 6L5 6l1.500 5L8 5" stroke="#fff" fill="none" /></Icon>
              Руководство пользоват...
            </TaskButton>
            <TaskButton>
              <Icon><path d="M1 4h14v10H1z" fill="#ffff8c" stroke="#000" strokeWidth="1.500" /><path d="M8 0v6M6 2h4" stroke="#000" strokeWidth="2" /><path d="M5 8v2M11 8v2M3 11h4M9 11h4" stroke="#000" strokeWidth="1.500" /></Icon>
              {"/\\/\\@/\\/|@( (Online) - Me..."}
            </TaskButton>
          </Tasks>
          <Tray>
            <Icon><path d="M0 0h16v16H0z" fill="#fff" /><path d="M1 5l3-4h11v9h-1v5H1z" fill="#e81010" /><path d="M3 5.500h7l3-3M3 8.500h4v4M9 8.500h3v4" stroke="#ffe0c0" fill="none" /></Icon>
            <Lang>EN</Lang>
            <Icon><path d="M1 6h3l5-5v14l-5-5H1z" fill="#f4ea60" stroke="#444" /><path d="M9 2v12" stroke="#000" /><path d="M11 5l3-2M11 8h4M11 11l3 2" stroke="#888" strokeDasharray="1 1" /></Icon>
            <Icon><path d="M1 1h8v14H1z" fill="#eee" stroke="#888" /><path d="M3 4h4M3 6h4" stroke="#777" /><circle cx="11" cy="11" r="4.500" fill="#fff" stroke="#188020" /><path d="M10 8v6l4-3z" fill="#108020" /></Icon>
            <Icon><circle cx="8" cy="8" r="6" fill="#38c828" stroke="#054005" strokeWidth="3" strokeDasharray="3 2" /><circle cx="8" cy="8" r="6" fill="none" stroke="#38d028" strokeDasharray="3 1" /><circle cx="8" cy="8" r="4" fill="#f8e820" /><path d="M6 6v2M10 6v2M5 9c2 3 4 3 6 0" stroke="#000" fill="none" /></Icon>
            <Clock>11:26</Clock>
          </Tray>
        </TaskBar>
      </Screen>
    </>
  );
}
